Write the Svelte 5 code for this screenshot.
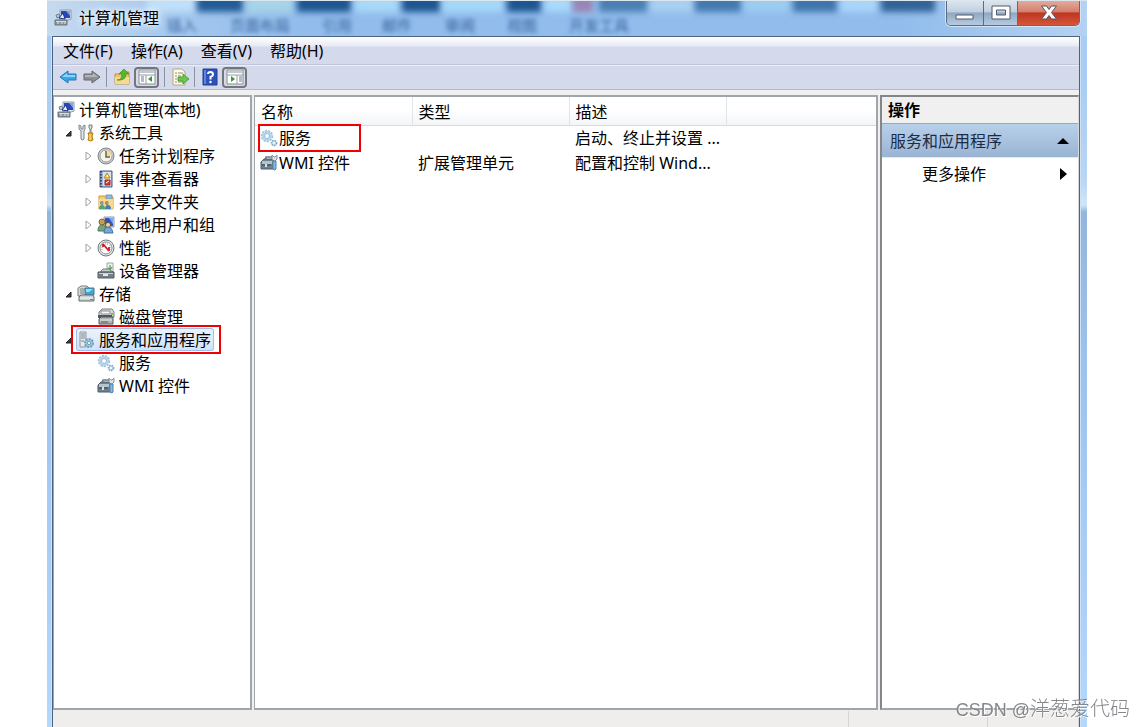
<script>
  const menus = ['文件(F)', '操作(A)', '查看(V)', '帮助(H)'];

  const tools = [
    { icon: 'back', label: '后退' },
    { icon: 'forward', label: '前进' },
    null,
    { icon: 'up', label: '上一级' },
    { icon: 'paneLeft', label: '显示/隐藏控制台树', pressed: true },
    null,
    { icon: 'export', label: '导出列表' },
    null,
    { icon: 'help', label: '帮助' },
    { icon: 'paneRight', label: '显示/隐藏操作窗格', pressed: true }
  ];

  const tree = [
    {
      name: '系统工具', icon: 'tools', open: true,
      children: [
        { name: '任务计划程序', icon: 'clock', more: true },
        { name: '事件查看器', icon: 'events', more: true },
        { name: '共享文件夹', icon: 'shared', more: true },
        { name: '本地用户和组', icon: 'users', more: true },
        { name: '性能', icon: 'gauge', more: true },
        { name: '设备管理器', icon: 'device' }
      ]
    },
    {
      name: '存储', icon: 'storage', open: true,
      children: [{ name: '磁盘管理', icon: 'disk' }]
    },
    {
      name: '服务和应用程序', icon: 'server', open: true,
      children: [
        { name: '服务', icon: 'gears' },
        { name: 'WMI 控件', icon: 'wmi' }
      ]
    }
  ];

  const rows = [
    { name: '服务', icon: 'gears', type: '', desc: '启动、终止并设置 ...', marked: true },
    { name: 'WMI 控件', icon: 'wmi', type: '扩展管理单元', desc: '配置和控制 Wind...' }
  ];

  // Blurred ribbon of the window behind the glass title bar
  const blobs = [
    { x: 100, w: 48, c: '#bfe0fa' },
    { x: 150, w: 46, c: '#245b94' },
    { x: 200, w: 46, c: '#a6d4e8' },
    { x: 250, w: 54, c: '#1d5590' },
    { x: 308, w: 44, c: '#a9d9f8' },
    { x: 355, w: 38, c: '#1d5590' },
    { x: 396, w: 60, c: '#a5d8f8' },
    { x: 460, w: 34, c: '#1d5590' },
    { x: 498, w: 26, c: '#a9d9fb' },
    { x: 526, w: 20, c: '#9a84b4' },
    { x: 552, w: 48, c: '#4c7fb0' },
    { x: 604, w: 42, c: '#a9d0f0' },
    { x: 648, w: 46, c: '#4479ae' },
    { x: 698, w: 44, c: '#9bcdf0' },
    { x: 746, w: 44, c: '#3f75ab' },
    { x: 794, w: 36, c: '#a9d6fa' },
    { x: 834, w: 54, c: '#316497' }
  ];
  const ghosts = [
    { x: 120, t: '插入' },
    { x: 183, t: '页面布局' },
    { x: 275, t: '引用' },
    { x: 335, t: '邮件' },
    { x: 398, t: '审阅' },
    { x: 460, t: '视图' },
    { x: 522, t: '开发工具' }
  ];

  let selected = $state('服务和应用程序');
</script>

{#snippet icon(name)}
  <svg class="icon" viewBox="0 0 18 18" width="18" height="18" aria-hidden="true">
    {#if name === 'computer'}
      <path d="M6 1h11v9l-3 1H6z" fill="#dfe6ef" stroke="#8e9aab" />
      <path d="M7 2h9v7H7z" fill="#2749b8" />
      <path d="M12 2h4v5z" fill="#7ba4ee" />
      <path d="M2 6l3-1 1 3-3 1z" fill="#bcc9d4" stroke="#728293" />
      <path d="M5 9l4-5 2 6z" fill="#e6eef8" stroke="#17308a" />
      <path d="M1 11h12v5H1z" fill="#8b959d" stroke="#6b757e" />
      <path d="M2 12h10v1H2z" fill="#d4dbe0" />
      <path d="M4 13v2M8 13v2M11 13v2" stroke="#e3e8ea" />
    {:else if name === 'tools'}
      <path d="M2 1v4l2 2v8q1 2 3 0V7l1-2V1L6 2v3H4V2z" fill="#e0e3e5" stroke="#7c858b" />
      <path d="M12 1h3v3l-1 1v5h-1V5l-1-1z" fill="#d6dadd" stroke="#788087" />
      <path d="M11 9h5l-1 3 1 4q-2 2-5 0l1-4z" fill="#efb72d" stroke="#b27a12" />
      <path d="M13 10v6" stroke="#ffe393" />
    {:else if name === 'clock'}
      <circle cx="9" cy="9" r="8" fill="#c5cbd1" stroke="#7f888f" />
      <circle cx="9" cy="9" r="6" fill="#f8f4df" stroke="#9aa3aa" />
      <path d="M9 3v6h6A6 6 0 0 0 9 3" fill="#f5d99b" />
      <path d="M9 4v6h4" fill="none" stroke="#4b6478" stroke-width="1.4" />
    {:else if name === 'events'}
      <path d="M3 1h12v16H3z" fill="#9cb8e0" stroke="#4c5a78" />
      <path d="M6 2h8v14H6z" fill="#d6e4f5" />
      <path d="M4 1v16" stroke="#3b4868" stroke-width="2" stroke-dasharray="1.5 1.5" />
      <path d="M10 3l3 5H7z" fill="#ffd43c" stroke="#bb8b13" />
      <path d="M8 10h5v5H8z" fill="#d33b35" stroke="#992a26" />
      <path d="M10.500 5v2M9 13l3-2" stroke="#fff" />
    {:else if name === 'shared'}
      <path d="M2 3h6l1 1h7v12H2z" fill="#f5cf70" stroke="#c7963a" />
      <path d="M9 2h6v4H9z" fill="#8dbbe7" stroke="#7d97ab" />
      <path d="M2 6h14v10H2z" fill="#f8da8c" />
      <circle cx="5" cy="10" r="1.800" fill="#375e83" />
      <circle cx="10" cy="10" r="1.800" fill="#624c38" />
      <path d="M2 16q0-4 3-4t3 4z" fill="#49a878" />
      <path d="M8 16q0-4 3-4t3 4z" fill="#477cb7" />
      <path d="M4 10h3M9 10h3" stroke="#f4e0bd" />
    {:else if name === 'users'}
      <path d="M7 1h10v10H7z" fill="#d7dde7" stroke="#929dad" />
      <path d="M8 2h8v8H8z" fill="#2c54c1" />
      <path d="M12 2h4v6z" fill="#81a7f1" />
      <circle cx="5" cy="6" r="3" fill="#c79c58" stroke="#8a6637" />
      <circle cx="11" cy="9" r="2.600" fill="#f0cfa4" stroke="#655344" />
      <path d="M1 15q0-6 4-6t4 6z" fill="#72a878" stroke="#4d7961" />
      <path d="M7 17q0-6 4-6t5 6z" fill="#71a9d8" stroke="#436e96" />
    {:else if name === 'gauge'}
      <circle cx="9" cy="9" r="8" fill="#e5e7e8" stroke="#73797e" />
      <circle cx="9" cy="9" r="6" fill="#fff" stroke="#8d9296" />
      <path d="M5 11V6M13 11V6M6 5h6" stroke="#8a9299" stroke-dasharray="1 1" />
      <path d="M6 5l6 7M6 5v3M12 8v4" fill="none" stroke="#d51b20" stroke-width="1.800" />
    {:else if name === 'device'}
      <path d="M10 1h6v9h-6z" fill="#eef3ee" stroke="#9ca7a1" />
      <path d="M13 3v5M11 6l2 2 2-3" fill="none" stroke="#56a554" stroke-width="1.300" />
      <path d="M3 10l3-3h6l4 3z" fill="#c3cbd0" stroke="#737d83" />
      <path d="M1 10h16v6H1z" fill="#748087" stroke="#545d63" />
      <path d="M2 11h14v1H2z" fill="#c7d0d4" />
      <path d="M6 12h5v2H6z" fill="#e3e7e8" />
    {:else if name === 'storage'}
      <path d="M1 3l3-2h6l2 2v8H1z" fill="#d5dcd9" stroke="#75817d" />
      <path d="M3 4h5M3 6h4M3 8h4" stroke="#738681" />
      <path d="M8 3h9v7H8z" fill="#39a8dc" stroke="#53758c" />
      <path d="M9 4h7l-4 3H9z" fill="#8ee0fb" />
      <path d="M2 12l2-2h12l1 2v4H2z" fill="#cbd1d1" stroke="#626c6c" />
      <path d="M3 13h13" stroke="#f7faf9" />
      <path d="M13 14h3v1h-3z" fill="#37ba3a" />
    {:else if name === 'disk'}
      <path d="M2 4l3-3h10l2 3v5H2z" fill="#d9dbdc" stroke="#7b8083" />
      <path d="M4 3h9v3H4z" fill="#f6f6f6" stroke="#8d9295" />
      <path d="M1 7h14v3H1z" fill="#50575b" />
      <path d="M2 11l2-2h12v7H2z" fill="#adb3b5" stroke="#565d60" />
      <path d="M3 12h12" stroke="#e6e9e9" />
      <path d="M4 14h7" stroke="#596165" />
      <path d="M14 5h2v2h-2z" fill="#7abb52" />
    {:else if name === 'server'}
      <path d="M3 1h6v15H3z" fill="#e4e9ed" stroke="#8c979f" />
      <path d="M4 3h4M4 5h4M4 7h4M4 10h3" stroke="#798991" />
      <circle cx="12" cy="12" r="4" fill="#a6cbe4" stroke="#6d9dbc" stroke-width="2" stroke-dasharray="2 1" />
      <circle cx="12" cy="12" r="1.600" fill="#fff" stroke="#709bb6" />
    {:else if name === 'gears'}
      <circle cx="7" cy="7" r="5" fill="#d4e9f7" stroke="#9cc1da" stroke-width="2.400" stroke-dasharray="2 1" />
      <circle cx="7" cy="7" r="4" fill="none" stroke="#b4d5ea" stroke-width="2" />
      <circle cx="7" cy="7" r="2.500" fill="#fff" stroke="#91b8d2" />
      <circle cx="14" cy="14" r="2.600" fill="#bbd9eb" stroke="#7da9c4" stroke-width="1.600" stroke-dasharray="1.500 1" />
      <circle cx="14" cy="14" r="1" fill="#fff" />
    {:else if name === 'wmi'}
      <path d="M5 6l1-3h6l1 3" fill="none" stroke="#6d7b85" stroke-width="1.500" />
      <path d="M2 7l2-2h10v10H1V8z" fill="#6d8190" stroke="#4f5e69" />
      <path d="M2 7h10v3H2z" fill="#b5c4cc" />
      <path d="M2 11h9" stroke="#344350" />
      <path d="M5 10h2v3H5z" fill="#d8e1e5" />
      <path d="M12 1v4l2 2h1l2-2V1l-2 2h-1z" fill="#dce3e7" stroke="#87929a" />
      <path d="M13 7h3v8q-1 2-3 0z" fill="#8db9dc" stroke="#4f7ea8" />
    {:else if name === 'back'}
      <path d="M1 9l8-6v3h8v6H9v3z" fill="#37a7e8" stroke="#2676b4" />
      <path d="M3 9l5-4v2h8v2z" fill="#8bd5fa" />
    {:else if name === 'forward'}
      <path d="M17 9L9 3v3H1v6h8v3z" fill="#8d9092" stroke="#65686b" />
      <path d="M15 9l-5-4v2H2v2z" fill="#b2b4b5" />
    {:else if name === 'up'}
      <path d="M2 6h5l1-2h8v12H2z" fill="#eac66d" stroke="#b99149" />
      <path d="M2 9h14v7H2z" fill="#f5da90" />
      <path d="M4 12q5 0 5-6H6l5-5 5 5h-3q0 7-9 6z" fill="#52b92c" stroke="#348522" stroke-width=".6" />
    {:else if name === 'paneLeft'}
      <path d="M1 2h16v14H1z" fill="#fff" stroke="#838994" />
      <path d="M2 3h14v2H2z" fill="#c3c8d0" />
      <path d="M1 7h16M8 7v9" stroke="#959ba6" />
      <path d="M3 9h3M3 11h3M3 13h3" stroke="#687796" />
      <path d="M14 8v6l-4-3z" fill="#28a22b" />
    {:else if name === 'paneRight'}
      <path d="M1 2h16v14H1z" fill="#fff" stroke="#838994" />
      <path d="M2 3h14v2H2z" fill="#c3c8d0" />
      <path d="M1 7h16M11 7v9" stroke="#959ba6" />
      <path d="M13 9h3M13 11h3M13 13h3" stroke="#687796" />
      <path d="M5 8v6l4-3z" fill="#28a22b" />
    {:else if name === 'export'}
      <path d="M2 1h9l3 3v13H2z" fill="#fffbe0" stroke="#b1a982" />
      <path d="M4 5h2M4 8h2M4 11h2M4 14h2M7 5h5M7 8h3M7 14h5" stroke="#8c8e84" />
      <path d="M7 9h5V6l6 5-6 5v-3H7z" fill="#6cc84b" stroke="#409330" stroke-width=".8" />
    {:else if name === 'help'}
      <path d="M2 1h14v16H2z" fill="#2b53bb" stroke="#23408c" />
      <path d="M3 2h2v14H3z" fill="#6085db" />
      <path d="M7 6q0-2 2.500-2T12 6.500Q12 8 9.500 9v2.500" fill="none" stroke="#fff" stroke-width="2" />
      <circle cx="9.500" cy="14" r="1.200" fill="#fff" />
    {/if}
  </svg>
{/snippet}

{#snippet node(item, expandable)}
  <div class="node">
    <span class="twisty">
      {#if item.open}
        <svg viewBox="0 0 12 12" width="12" height="12"><path d="M9 4v5H4z" fill="#404040" stroke="#222" /></svg>
      {:else if expandable}
        <svg viewBox="0 0 12 12" width="12" height="12"><path d="M4 2l5 4-5 4z" fill="#fff" stroke="#a0a0a0" /></svg>
      {/if}
    </span>
    <button class="label" class:selected={selected === item.name} class:marked={item.icon === 'server'} onclick={() => (selected = item.name)}>
      {@render icon(item.icon)}
      <span>{item.name}</span>
    </button>
  </div>
{/snippet}

<div class="window">
  <header class="titlebar">
    <svg class="glass" height="36" aria-hidden="true">
      <defs>
        <filter id="soft" x="-20%" y="-50%" width="140%" height="200%"><feGaussianBlur stdDeviation="3" /></filter>
        <filter id="softText" x="-20%" y="-50%" width="140%" height="200%"><feGaussianBlur stdDeviation="2" /></filter>
      </defs>
      {#each blobs as b}
        <rect x={b.x} y="-6" width={b.w} height="17" fill={b.c} filter="url(#soft)" />
      {/each}
      {#each ghosts as g}
        <text x={g.x} y="30" filter="url(#softText)">{g.t}</text>
      {/each}
    </svg>
    <h1>{@render icon('computer')}<span>计算机管理</span></h1>
    <div class="caption">
      <button aria-label="最小化">
        <svg viewBox="0 0 20 16" width="20" height="16"><path d="M1 10h17v4H1z" fill="#fff" stroke="#525b6b" /></svg>
      </button>
      <button aria-label="最大化">
        <svg viewBox="0 0 20 16" width="20" height="16"><path d="M1 1h18v13H1zM5.500 5v5h9V5z" fill="#fff" fill-rule="evenodd" stroke="#525b6b" /></svg>
      </button>
      <button class="close" aria-label="关闭">
        <svg viewBox="0 0 18 16" width="18" height="16"><path d="M1.500 1h5L9 4.500 11.500 1h5l-5 6.500 5 6.500h-5L9 10.500 6.500 14h-5l5-6.500z" fill="#fff" stroke="#5b5260" /></svg>
      </button>
    </div>
  </header>

  <div class="client">
    <nav class="menubar">
      {#each menus as m}
        <button>{m}</button>
      {/each}
    </nav>
    <div class="toolbar">
      {#each tools as t}
        {#if t}
          <button class:pressed={t.pressed} aria-label={t.label} title={t.label}>{@render icon(t.icon)}</button>
        {:else}
          <i class="sep"></i>
        {/if}
      {/each}
    </div>

    <main class="panes">
      <aside class="tree">
        <button class="label root">{@render icon('computer')}<span>计算机管理(本地)</span></button>
        <ul>
          {#each tree as group}
            <li>
              {@render node(group, true)}
              <ul class="sub">
                {#each group.children as child}
                  <li>{@render node(child, child.more)}</li>
                {/each}
              </ul>
            </li>
          {/each}
        </ul>
      </aside>

      <section class="list">
        <table>
          <thead>
            <tr><th>名称</th><th>类型</th><th>描述</th><th class="rest" aria-label="空"></th></tr>
          </thead>
          <tbody>
            {#each rows as row}
              <tr>
                <td class="name"><span class="item" class:marked={row.marked}>{@render icon(row.icon)}{row.name}</span></td>
                <td>{row.type}</td>
                <td>{row.desc}</td>
                <td></td>
              </tr>
            {/each}
          </tbody>
        </table>
      </section>

      <aside class="actions">
        <h2>操作</h2>
        <button class="band">
          <span>服务和应用程序</span>
          <svg viewBox="0 0 12 12" width="12" height="12"><path d="M0 9l6-6 6 6z" /></svg>
        </button>
        <button class="more">
          <span>更多操作</span>
          <svg viewBox="0 0 12 12" width="12" height="12"><path d="M3 0l7 6-7 6z" /></svg>
        </button>
      </aside>
    </main>

    <footer class="status"><span></span><span></span><span></span></footer>
  </div>
</div>
<div class="watermark"><span>CSDN @</span>洋葱爱代码</div>

<style>
  :global(body) {
    background: #fff;
  }

  .window {
    display: flex;
    flex-direction: column;
    box-sizing: border-box;
    min-height: 100vh;
    margin: 0 57px 0 47px;
    padding: 0 7px 0 5px;
    background: linear-gradient(#a9cdf4 0, #a9cdf4 80px, #b9d6f3 180px, #d2e5f7 205px, #94b6dc 212px, #9fc5ef 400px, #b4d7fd 100%);
    font-family: "Noto Sans", "Noto Sans CJK SC", sans-serif;
    font-size: 16px;
    line-height: 22px;
    color: #000;
  }

  button {
    margin: 0;
    padding: 0;
    border: 0;
    background: none;
    font: inherit;
    color: inherit;
    text-align: left;
  }

  .icon {
    flex: none;
    display: block;
  }

  .titlebar {
    position: relative;
    display: flex;
    justify-content: space-between;
    align-items: flex-start;
    height: 36px;
    margin: 0 -7px 0 -5px;
    background: linear-gradient(90deg, #c6daee 0, #a5c8ee 12%, #91bcec 25%, #91bcec 82%, #b4d2f2 100%);
    border-top: 1px solid #dce6ee;
    box-sizing: border-box;
    overflow: hidden;
  }

  .glass {
    position: absolute;
    top: 0;
    left: 0;
    width: 100%;
  }

  .glass text {
    font-size: 15px;
    fill: #35609a;
  }

  h1 {
    position: relative;
    display: flex;
    align-items: center;
    gap: 7px;
    margin: 6px 0 0 7px;
    font-size: 16px;
    line-height: 22px;
    font-weight: 400;
  }

  h1 span {
    text-shadow: 0 0 6px #fff, 0 0 10px #fff;
  }

  .caption {
    position: relative;
    display: flex;
    height: 25px;
    margin-right: 7px;
    border: 1px solid #5d6b7d;
    border-top: 0;
    border-radius: 0 0 5px 5px;
    box-shadow: 0 0 0 1px #d2e4f6;
    box-sizing: border-box;
    overflow: hidden;
  }

  .caption button {
    display: flex;
    align-items: center;
    justify-content: center;
    width: 36px;
    background: linear-gradient(#dbe5ee 0, #c1cfdf 45%, #8fa7c3 50%, #b6cbe2 100%);
  }

  .caption button + button {
    width: 34px;
    border-left: 1px solid #5d6b7d;
  }

  .caption .close.close {
    width: 62px;
    background: linear-gradient(#e2aa9c 0, #d47f6c 45%, #bf3520 50%, #d3563a 100%);
  }

  .client {
    flex: 1;
    display: flex;
    flex-direction: column;
    border: 1px solid #4d6480;
    border-bottom: 0;
    background: #f0f0f0;
    box-shadow: 0 0 0 1px #cfe1f5;
  }

  .menubar {
    display: flex;
    gap: 18px;
    height: 27px;
    padding: 0 10px;
    background: linear-gradient(#fff 0, #e6eaf5 9px, #d4d9ec 10px);
  }

  .menubar button {
    height: 27px;
    white-space: nowrap;
  }

  .toolbar {
    display: flex;
    align-items: center;
    gap: 5px;
    height: 26px;
    padding: 0 5px;
    background: #d4d9ec;
    border-top: 1px solid #c0c6da;
    border-bottom: 1px solid #b4b9c6;
    box-shadow: inset 0 1px #eceff8;
    box-sizing: border-box;
  }

  .toolbar button {
    display: flex;
    justify-content: center;
    width: 19px;
  }

  .toolbar .pressed {
    width: 25px;
    height: 21px;
    align-items: center;
    border: 2px solid #73767f;
    border-radius: 4px;
    background: #d9dce5;
    box-sizing: border-box;
    margin-left: -2px;
  }

  .sep {
    width: 1px;
    height: 20px;
    background: #8b92a4;
  }

  .panes {
    flex: 1;
    display: grid;
    grid-template-columns: 199px 1fr 199px;
    gap: 2px;
    padding-top: 5px;
  }

  .tree,
  .list,
  .actions {
    border: 2px solid #a0a5ac;
    border-left-width: 1px;
    background: #fff;
    min-width: 0;
  }

  .tree {
    padding-top: 1px;
  }

  ul {
    margin: 0;
    padding: 0 0 0 8px;
    list-style: none;
  }

  .sub {
    padding-left: 20px;
  }

  .node {
    display: flex;
    align-items: center;
    gap: 2px;
    height: 23px;
  }

  .twisty {
    width: 12px;
    height: 12px;
    display: flex;
  }

  .label {
    position: relative;
    display: flex;
    align-items: center;
    gap: 4px;
    height: 23px;
    padding: 0 3px 0 1px;
    border-radius: 3px;
    white-space: nowrap;
  }

  .root {
    margin-left: 2px;
  }

  .selected {
    background: linear-gradient(#edf4fd, #cfe2fa);
    box-shadow: inset 0 0 0 1px #9fc0e8;
  }

  .marked::after {
    content: '';
    position: absolute;
    inset: -3px -7px -3px -5px;
    border: 2px solid #f00000;
  }

  table {
    width: 100%;
    table-layout: fixed;
    border-collapse: collapse;
  }

  th,
  td {
    height: 25px;
    padding: 0 0 0 6px;
    text-align: left;
    font-weight: 400;
    white-space: nowrap;
    box-sizing: border-box;
  }

  th {
    width: 157px;
    height: 28px;
    padding-top: 2px;
    background: linear-gradient(#fff 45%, #f3f5f7);
    border-bottom: 1px solid #d8dbdf;
    border-right: 1px solid #e1e4e8;
  }

  th.rest {
    width: auto;
    border-right: 0;
  }

  td.name {
    padding-left: 5px;
  }

  .item {
    position: relative;
    display: flex;
    align-items: center;
    gap: 1px;
  }

  .item.marked::after {
    inset: -3px 51px -3px -2px;
  }

  .actions {
    border-top-color: #84868a;
    border-left: 2px solid #84868a;
    border-right: 1px solid #d5d7da;
  }

  h2 {
    margin: 0;
    padding: 0 6px;
    height: 26px;
    font-size: 16px;
    line-height: 26px;
    font-weight: 700;
    background: #f0f0f0;
    border-bottom: 1px solid #a5a5a5;
  }

  .band,
  .more {
    display: flex;
    align-items: center;
    justify-content: space-between;
    width: 100%;
    height: 32px;
    padding: 0 9px 0 8px;
  }

  .band {
    height: 34px;
    color: #1b2c46;
    background: linear-gradient(#b8d0e9, #99b4d3);
    border-bottom: 1px solid #dceafa;
  }

  .more {
    padding-left: 40px;
  }

  .band svg,
  .more svg {
    fill: #000;
  }

  .status {
    display: flex;
    height: 16px;
    padding-top: 1px;
    background: #f0eded;
  }

  .status span {
    width: 90px;
    border-right: 1px solid #d6d4d4;
  }

  .status span:first-child {
    flex: 1;
  }

  .status span:nth-child(2) {
    width: 138px;
  }

  .watermark {
    position: fixed;
    right: 14px;
    bottom: 3px;
    font-family: "Liberation Sans", "Noto Sans CJK SC", sans-serif;
    font-size: 20px;
    line-height: 28px;
    font-weight: 300;
    color: #85878a;
    text-shadow: 1px 1px #fff;
    white-space: nowrap;
  }

  .watermark span {
    font-size: 18px;
  }
</style>
